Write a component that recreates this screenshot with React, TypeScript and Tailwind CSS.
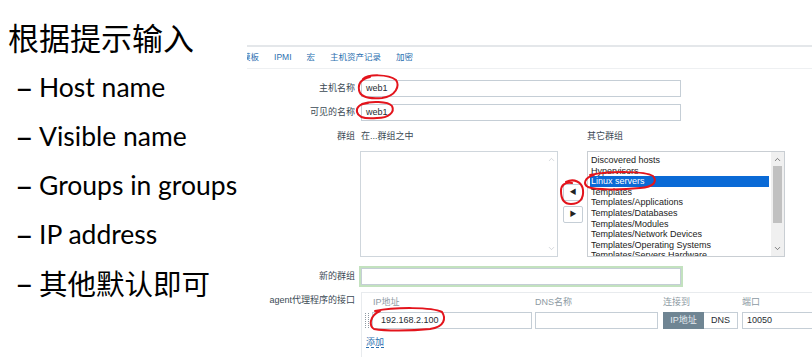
import { ChevronUp, ChevronDown } from "lucide-react";

const zbxFont = "font-['Liberation_Sans','Noto_Sans_CJK_SC',sans-serif]";

const otherGroups = [
  "Discovered hosts",
  "Hypervisors",
  "Linux servers",
  "Templates",
  "Templates/Applications",
  "Templates/Databases",
  "Templates/Modules",
  "Templates/Network Devices",
  "Templates/Operating Systems",
  "Templates/Servers Hardware",
];

function Bullets() {
  const items = ["Host name", "Visible name", "Groups in groups", "IP address"];
  return (
    <div className="w-[247px] shrink-0 pl-[8px] pt-[19px] text-black">
      <h1 className="font-['Noto_Sans_CJK_SC',sans-serif] text-[31px] leading-[36px]">根据提示输入</h1>
      <ul className="mt-[8px] font-['Lato','Noto_Sans_CJK_SC',sans-serif] text-[26.5px]">
        {items.map((t) => (
          <li key={t} className="flex h-[49px] items-center pl-[7px]">
            <span className="w-[24px] text-[32px] leading-none font-medium">–</span>
            <span>{t}</span>
          </li>
        ))}
        <li className="flex h-[49px] items-center pl-[7px]">
          <span className="w-[24px] text-[32px] leading-none font-medium">–</span>
          <span className="font-['Noto_Sans_CJK_SC',sans-serif] text-[28.5px]">其他默认即可</span>
        </li>
      </ul>
    </div>
  );
}

function Field({ value, className = "" }: { value?: string; className?: string }) {
  return (
    <div className={`flex h-[17px] items-center border border-[#c5ced6] bg-white px-[4px] text-[9px] text-[#1f2c33] ${className}`}>
      {value}
    </div>
  );
}

function ZabbixForm() {
  return (
    <div className={`min-w-0 flex-1 overflow-hidden ${zbxFont}`}>
      {/* tabs */}
      <div className="mt-[45px] flex h-[24px] items-center gap-[15px] border-y border-t-2 border-[#e4e7ea] border-b-[#eef0f2] ml-[-5px] text-[8.5px] text-[#2b6fb0]">
        <span>模板</span>
        <span>IPMI</span>
        <span>宏</span>
        <span>主机资产记录</span>
        <span>加密</span>
      </div>

      <div className="grid grid-cols-[108px_1fr] gap-x-[6px] text-[9px] text-[#3b4a54]">
        {/* host name */}
        <div className="mt-[11px] flex items-center justify-end">主机名称</div>
        <Field value="web1" className="mt-[11px] w-[320px]" />

        {/* visible name */}
        <div className="mt-[7px] flex items-center justify-end">可见的名称</div>
        <Field value="web1" className="mt-[7px] w-[320px]" />

        {/* groups */}
        <div className="mt-[10px] flex h-[12px] items-center justify-end">群组</div>
        <div className="mt-[10px]">
          <div className="flex h-[12px] items-center">
            <span className="w-[226px]">在...群组之中</span>
            <span>其它群组</span>
          </div>
          <div className="mt-[8px] flex">
            <div className="ml-[-1px] flex h-[106px] w-[198px] justify-end border border-[#cfd6dc] bg-white">
              <div className="flex w-[12px] flex-col items-center justify-between py-[3px] text-[#b6bcc2]">
                <ChevronUp size={9} strokeWidth={1.5} />
                <ChevronDown size={9} strokeWidth={1.5} />
              </div>
            </div>
            <div className="ml-[5px] flex flex-col pt-[33px]">
              <button className="flex h-[17px] w-[20px] items-center justify-center rounded-[2px] border border-[#c5ced6] bg-white text-[7px] text-[#222]">◀</button>
              <button className="mt-[5px] flex h-[17px] w-[20px] items-center justify-center rounded-[2px] border border-[#c5ced6] bg-white text-[7px] text-[#222]">▶</button>
            </div>
            <div className="ml-[4px] flex h-[106px] w-[198px] border border-[#c9ced3] bg-white">
              <ul className="flex-1 overflow-hidden pl-[2px] pt-[3px] text-[9px] leading-[10.6px] text-[#222]">
                {otherGroups.map((g) => (
                  <li
                    key={g}
                    className={g === "Linux servers" ? "bg-[#0a6ad6] pl-[1px] text-white" : "pl-[1px]"}
                  >
                    {g}
                  </li>
                ))}
              </ul>
              <div className="ml-[2px] flex w-[13px] flex-col items-center bg-[#f0f0f0] text-[#555]">
                <ChevronUp size={9} strokeWidth={2} className="mt-[3px]" />
                <div className="mt-[2px] h-[57px] w-[9px] bg-[#c1c1c1]" />
                <div className="flex-1" />
                <ChevronDown size={9} strokeWidth={2} className="mb-[3px]" />
              </div>
            </div>
          </div>
        </div>

        {/* new group */}
        <div className="mt-[11px] flex items-center justify-end">新的群组</div>
        <Field className="mt-[11px] w-[320px] outline-2 outline-[#c3e2bf]" />

        {/* interfaces */}
        <div className="mt-[7px] pt-[2px] text-right">agent代理程序的接口</div>
        <div className="mt-[7px] h-[80px] border border-[#e8ebee] pl-[3px] pt-[3px]">
          <div className="flex items-end">
            <div className="mb-[1px] h-[15px] w-[4px] border-x border-dotted border-[#8f9aa3]" />
            <div className="ml-[3px] flex w-[160px] flex-col">
              <span className="h-[12px] pl-[1px] leading-[12px] text-[#8d9aa3]">IP地址</span>
              <Field value="192.168.2.100" className="mt-[4px] w-[160px] pl-[8px]" />
            </div>
            <div className="ml-[3px] flex w-[123px] flex-col">
              <span className="h-[12px] leading-[12px] text-[#8d9aa3]">DNS名称</span>
              <Field className="mt-[4px] w-[123px]" />
            </div>
            <div className="ml-[5px] flex flex-col">
              <span className="h-[12px] leading-[12px] text-[#8d9aa3]">连接到</span>
              <div className="mt-[4px] flex h-[17px]">
                <span className="flex w-[41px] items-center justify-center bg-[#6f8593] text-[#e6ecf0]">IP地址</span>
                <span className="flex w-[34px] items-center justify-center border border-l-0 border-[#c5ced6] bg-white text-[#1f2c33]">DNS</span>
              </div>
            </div>
            <div className="ml-[4px] flex flex-col">
              <span className="h-[12px] leading-[12px] text-[#8d9aa3]">端口</span>
              <Field value="10050" className="mt-[4px] w-[90px]" />
            </div>
          </div>
          <div className="mt-[7px] pl-[1px]">
            <span className="border-b border-dashed border-[#2b6fb0] text-[#2b6fb0]">添加</span>
          </div>
        </div>
      </div>
    </div>
  );
}

function Marks() {
  const loops = [
    "M363 79 C368 74 388 74 396 80 C400 86 396 96 382 98 C370 99 360 97 359 90 C358 84 361 79 370 77",
    "M362 104 C370 101 388 101 392 106 C395 112 389 118 377 118 C366 119 358 117 357 112 C356 107 360 104 368 103",
    "M590 175 C610 171 645 171 653 176 C657 181 655 187 640 188 C620 190 596 190 588 187 C583 184 584 178 594 175",
    "M566 182 C574 178 582 182 583 190 C584 199 579 204 571 204 C563 204 561 198 561 191 C561 185 565 182 572 183",
    "M375 311 C395 307 432 307 442 312 C446 318 445 327 430 329 C410 331 385 331 374 329 C369 326 369 316 380 311",
  ];
  return (
    <svg className="pointer-events-none absolute inset-0" width="812" height="357" viewBox="0 0 812 357">
      {loops.map((d, i) => (
        <path key={i} d={d} fill="none" stroke="#e3141c" strokeWidth="2" strokeLinecap="round" />
      ))}
    </svg>
  );
}

export default function App() {
  return (
    <div className="relative flex h-[357px] w-[812px] overflow-hidden bg-white">
      <Bullets />
      <ZabbixForm />
      <Marks />
    </div>
  );
}
